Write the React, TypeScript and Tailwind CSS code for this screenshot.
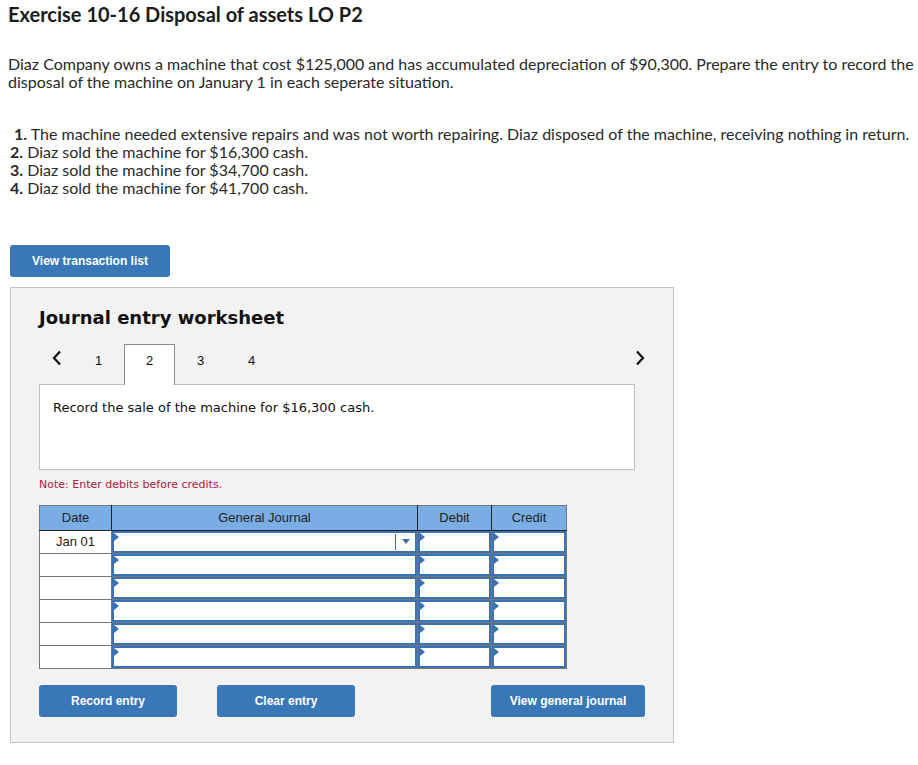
import React from "react";

const Chevron = ({ dir }: { dir: "left" | "right" }) => (
  <svg width="10" height="16" viewBox="0 0 10 16" className="block">
    <polyline
      points={dir === "left" ? "8,1.5 2,8 8,14.5" : "2,1.5 8,8 2,14.5"}
      fill="none"
      stroke="#111"
      strokeWidth="2.2"
    />
  </svg>
);

// small blue marker in the corner of every input cell
const Marker = () => (
  <span className="absolute left-0 top-0 h-0 w-0 border-y-[4px] border-l-[5px] border-y-transparent border-l-[#3b72b5]" />
);

function InputCell({ dropdown = false }: { dropdown?: boolean }) {
  return (
    <td className="border border-[#777] p-0">
      <div className="relative h-[22px] border-2 border-[#3b72b5] bg-white">
        <Marker />
        {dropdown && (
          <div className="absolute right-0 top-0 flex h-full items-center">
            <span className="h-[16px] w-px bg-[#3b72b5]" />
            <span className="ml-[6px] mr-[5px] h-0 w-0 border-x-[4px] border-t-[5px] border-x-transparent border-t-[#3b72b5]" />
          </div>
        )}
      </div>
    </td>
  );
}

const situations = [
  "The machine needed extensive repairs and was not worth repairing. Diaz disposed of the machine, receiving nothing in return.",
  "Diaz sold the machine for $16,300 cash.",
  "Diaz sold the machine for $34,700 cash.",
  "Diaz sold the machine for $41,700 cash.",
];

export default function App() {
  const rows = [0, 1, 2, 3, 4, 5];

  return (
    <div className="min-h-[765px] w-[918px] bg-white px-2 text-[#222]" style={{ fontFamily: "Lato, 'Open Sans', sans-serif" }}>
      {/* Heading */}
      <h1 className="pt-[2px] text-[20px] font-bold leading-[24px] text-[#1c1c1c]">
        Exercise 10-16 Disposal of assets LO P2
      </h1>

      {/* Problem statement */}
      <p className="mt-[29px] whitespace-nowrap text-[16px] leading-[18px] text-[#2a2a2a]">
        Diaz Company owns a machine that cost $125,000 and has accumulated depreciation of $90,300. Prepare the entry to record the
        <br />
        disposal of the machine on January 1 in each seperate situation.
      </p>

      <ol className="mt-[34px] text-[16px] leading-[18px] text-[#2a2a2a]">
        {situations.map((s, i) => (
          <li key={i} className={`whitespace-nowrap ${i === 0 ? "pl-[6px]" : "pl-[2px]"}`}>
            <span className="font-bold">{i + 1}.</span> {s}
          </li>
        ))}
      </ol>

      <button
        className="ml-[2px] mt-[48px] h-[32px] w-[160px] rounded-[3px] bg-[#3a77b9] text-[12px] font-bold text-white"
        style={{ fontFamily: "'Liberation Sans', Arial, sans-serif" }}
      >
        View transaction list
      </button>

      {/* Worksheet panel */}
      <div className="ml-[2px] mt-[10px] w-[664px] border border-[#c4c4c4] bg-[#f2f2f2] pb-[25px] pl-[28px] pt-[18px]">
        <h2 className="text-[18px] font-bold leading-[24px] text-[#111]" style={{ fontFamily: "'DejaVu Sans', Verdana, sans-serif" }}>
          Journal entry worksheet
        </h2>

        {/* Tabs */}
        <div
          className="relative z-10 mt-[14px] flex h-[41px] w-[607px] items-start text-[13px] leading-[15px] text-[#111]"
          style={{ fontFamily: "'Liberation Sans', Arial, sans-serif" }}
        >
          <span className="flex w-[34px] justify-center pl-[2px] pt-[6px]">
            <Chevron dir="left" />
          </span>
          <span className="w-[51px] pt-[9px] text-center">1</span>
          <span className="flex h-full w-[51px] justify-center border border-b-0 border-[#8a8a8a] bg-white pt-[8px]">2</span>
          <span className="w-[51px] pt-[9px] text-center">3</span>
          <span className="w-[51px] pt-[9px] text-center">4</span>
          <span className="ml-auto flex w-[12px] justify-center pt-[6px]">
            <Chevron dir="right" />
          </span>
        </div>

        <div className="-mt-px h-[86px] w-[596px] border border-[#c0c0c0] bg-white px-[13px] pt-[13px]">
          <p className="text-[13px] text-[#111]" style={{ fontFamily: "'DejaVu Sans', Verdana, sans-serif" }}>
            Record the sale of the machine for $16,300 cash.
          </p>
        </div>

        <p className="mt-[7px] text-[11px] text-[#b1203c]" style={{ fontFamily: "'DejaVu Sans', Verdana, sans-serif" }}>
          Note: Enter debits before credits.
        </p>

        {/* Journal grid */}
        <table
          className="mt-[11px] w-[527px] table-fixed border-collapse border border-[#777] text-[13px] text-[#222]"
          style={{ fontFamily: "'Liberation Sans', Arial, sans-serif" }}
        >
          <colgroup>
            <col className="w-[72px]" />
            <col className="w-[306px]" />
            <col className="w-[74px]" />
            <col className="w-[75px]" />
          </colgroup>
          <thead>
            <tr className="h-[25px] bg-[#79ade3]">
              <th className="border-b border-r border-[#222] font-normal">Date</th>
              <th className="border-b border-r border-[#222] font-normal">General Journal</th>
              <th className="border-b border-r border-[#222] font-normal">Debit</th>
              <th className="border-b border-[#222] font-normal">Credit</th>
            </tr>
          </thead>
          <tbody>
            {rows.map((r) => (
              <tr key={r}>
                <td className="h-[23px] border border-[#777] bg-white p-0 text-center">{r === 0 ? "Jan 01" : ""}</td>
                <InputCell dropdown={r === 0} />
                <InputCell />
                <InputCell />
              </tr>
            ))}
          </tbody>
        </table>

        {/* Actions */}
        <div className="mt-[16px] flex w-[606px] items-center text-[12px] font-bold text-white" style={{ fontFamily: "'Liberation Sans', Arial, sans-serif" }}>
          <button className="h-[32px] w-[138px] rounded-[3px] bg-[#3a77b9]">Record entry</button>
          <button className="ml-[40px] h-[32px] w-[138px] rounded-[3px] bg-[#3a77b9]">Clear entry</button>
          <button className="ml-auto h-[32px] w-[154px] rounded-[3px] bg-[#3a77b9]">View general journal</button>
        </div>
      </div>
    </div>
  );
}
